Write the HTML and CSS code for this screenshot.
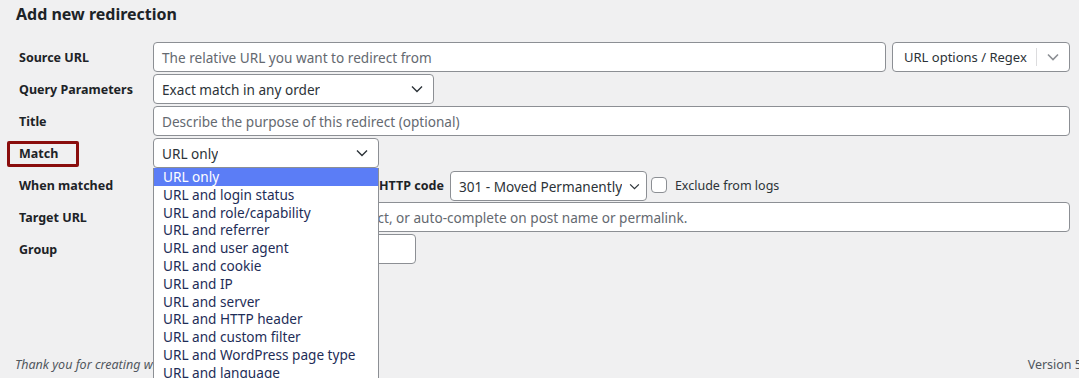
FILE: index.html
```html
<!DOCTYPE html>
<html lang="en">
<head>
  <meta charset="UTF-8">
  <meta name="viewport" content="width=device-width, initial-scale=1.0">
  <title>Add new redirection</title>
  <link rel="stylesheet" href="styles.css">
</head>
<body>
  <div class="wrap">
    <h2 class="title">Add new redirection</h2>

    <div class="form">
      <div class="label">Source URL</div>
      <div class="field">
        <div class="input grow placeholder">The relative URL you want to redirect from</div>
        <div class="select split options">
          <span class="select-text">URL options / Regex</span>
          <span class="split-arrow">
            <svg width="12" height="8" viewBox="0 0 12 8"><path d="M1 1.5l5 5 5-5" fill="none" stroke="#8c8f94" stroke-width="1.6"/></svg>
          </span>
        </div>
      </div>

      <div class="label">Query Parameters</div>
      <div class="field">
        <div class="select query">
          <span class="select-text">Exact match in any order</span>
          <svg width="12" height="8" viewBox="0 0 12 8"><path d="M1 1.5l5 5 5-5" fill="none" stroke="#2c3338" stroke-width="1.4"/></svg>
        </div>
      </div>

      <div class="label">Title</div>
      <div class="field">
        <div class="input grow placeholder">Describe the purpose of this redirect (optional)</div>
      </div>

      <div class="label highlighted">
        Match
        <span class="note-box"></span>
      </div>
      <div class="field">
        <div class="select match">
          <span class="select-text">URL only</span>
          <svg width="12" height="8" viewBox="0 0 12 8"><path d="M1 1.5l5 5 5-5" fill="none" stroke="#2c3338" stroke-width="1.4"/></svg>
          <ul class="menu">
            <li class="active">URL only</li>
            <li>URL and login status</li>
            <li>URL and role/capability</li>
            <li>URL and referrer</li>
            <li>URL and user agent</li>
            <li>URL and cookie</li>
            <li>URL and IP</li>
            <li>URL and server</li>
            <li>URL and HTTP header</li>
            <li>URL and custom filter</li>
            <li>URL and WordPress page type</li>
            <li>URL and language</li>
          </ul>
        </div>
      </div>

      <div class="label">When matched</div>
      <div class="field when">
        <div class="select action">
          <span class="select-text">Redirect to URL</span>
        </div>
        <span class="inline-label">HTTP code</span>
        <div class="select code">
          <span class="select-text">301 - Moved Permanently</span>
          <svg width="11" height="7" viewBox="0 0 12 8"><path d="M1 1.5l5 5 5-5" fill="none" stroke="#2c3338" stroke-width="1.4"/></svg>
        </div>
        <span class="checkbox"></span>
        <span class="check-label">Exclude from logs</span>
      </div>

      <div class="label">Target URL</div>
      <div class="field">
        <div class="input grow placeholder">The target URL you want to redirect, or auto-complete on post name or permalink.</div>
      </div>

      <div class="label">Group</div>
      <div class="field">
        <div class="select group">
          <span class="select-text">Redirections</span>
        </div>
      </div>
    </div>
  </div>

  <div class="footer">
    <p class="thanks">Thank you for creating with WordPress.</p>
    <p class="version">Version 5.8.1</p>
  </div>
</body>
</html>
```

FILE: styles.css
```css
html, body {
  margin: 0;
  padding: 0;
  height: 100%;
  overflow: hidden;
}

body {
  font-family: 'Noto Sans', 'Open Sans', sans-serif;
  font-size: 13.6px;
  color: #2c3338;
  background-color: #f0f0f1;
  display: flex;
  flex-direction: column;
}

.wrap {
  padding: 0 9px 0 16px;
  flex: 1;
}

.title {
  font-size: 16px;
  font-weight: 700;
  color: #1d2327;
  margin: 3px 0 0;
  line-height: 22px;
}

.form {
  display: grid;
  grid-template-columns: 134px 1fr;
  row-gap: 2px;
  margin-top: 17px;
  padding-left: 3px;
}

.label {
  font-size: 12.5px;
  font-weight: 700;
  color: #1d2327;
  display: flex;
  align-items: center;
  height: 30px;
  position: relative;
}

.note-box {
  position: absolute;
  left: -12px;
  top: 3px;
  width: 66px;
  height: 20px;
  border: 3px solid #8a0d0d;
  border-radius: 2px;
}

.field {
  display: flex;
  align-items: center;
  gap: 6px;
  height: 30px;
}

.input, .select {
  box-sizing: border-box;
  height: 30px;
  background: #fff;
  border: 1px solid #8c8f94;
  border-radius: 4px;
  padding: 0 8px;
  display: flex;
  align-items: center;
  white-space: nowrap;
  overflow: visible;
}

.grow {
  flex: 1;
  overflow: hidden;
}

.placeholder {
  color: #646970;
}

.select {
  justify-content: space-between;
  gap: 4px;
}

.select-text {
  overflow: hidden;
}

.options {
  width: 178px;
  padding: 0 0 0 11px;
  font-size: 13px;
}

.split-arrow {
  display: flex;
  align-items: center;
  justify-content: center;
  width: 32px;
  height: 18px;
  border-left: 1px solid #dcdcde;
}

.query {
  width: 281px;
  padding-right: 10px;
}

.match {
  width: 226px;
  padding-right: 10px;
  position: relative;
}

.menu {
  position: absolute;
  left: -1px;
  top: 29px;
  width: 226px;
  box-sizing: border-box;
  margin: 0;
  padding: 0 0 20px;
  list-style: none;
  background: #fff;
  border: 1px solid #8c8f94;
  border-top: none;
  z-index: 5;
}

.menu li {
  height: 17.8px;
  line-height: 17.8px;
  padding-left: 9px;
  color: #1e2d57;
}

.menu li.active {
  background: #5b7df6;
  color: #fff;
}

.when {
  gap: 0;
}

.action {
  width: 220px;
  margin-right: 6px;
}

.inline-label {
  font-size: 12.5px;
  font-weight: 700;
  color: #1d2327;
  margin-right: 6px;
}

.code {
  width: 197px;
  padding: 0 6px 0 8px;
  margin-top: 2px;
}

.checkbox {
  box-sizing: border-box;
  width: 16px;
  height: 16px;
  border: 1px solid #8c8f94;
  border-radius: 4px;
  background: #fff;
  margin: 0 8px 0 4px;
}

.check-label {
  font-size: 12.5px;
  color: #2c3338;
}

.group {
  width: 263px;
}

.footer {
  display: flex;
  justify-content: space-between;
  padding: 0 0 5px 15px;
  margin-right: -24px;
  font-size: 12.5px;
  color: #50575e;
}

.footer p {
  margin: 0;
}

.thanks {
  font-style: italic;
}
```
